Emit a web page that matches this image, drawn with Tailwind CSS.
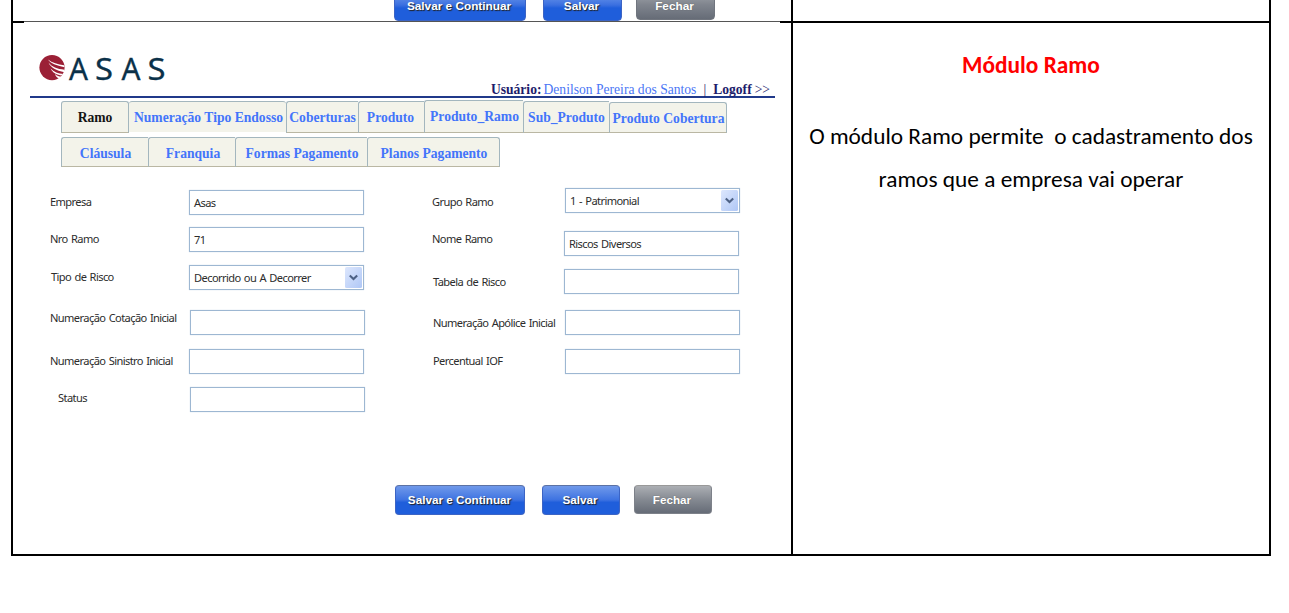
<!DOCTYPE html>
<html lang="pt-BR">
<head>
<meta charset="utf-8">
<title>Módulo Ramo</title>
<script src="https://cdn.jsdelivr.net/npm/@tailwindcss/browser@4"></script>
</head>
<body class="bg-white h-[613px] overflow-hidden pl-[11px]">
<div class="w-[1260px] h-[556px] flex flex-col">

  <!-- End of the previous table row -->
  <div class="flex h-[21px] border-x-2 border-black overflow-hidden">
    <div class="w-[778px] flex items-end pl-[381px] font-['Liberation_Sans',Arial,sans-serif] font-bold text-[11.8px] text-white text-center">
      <div class="w-[132px] h-[32px] shrink-0 rounded-b-[4px] border border-[#3c64c4] bg-linear-to-b from-[#6f98ea] from-10% via-[#3b70e0] via-50% to-[#1f5edb] to-60% leading-[32px] pr-[2px] [text-shadow:1px_1px_1px_#222]">Salvar e Continuar</div>
      <div class="w-[79px] h-[32px] shrink-0 ml-[17px] rounded-b-[4px] border border-[#3c64c4] bg-linear-to-b from-[#6f98ea] from-10% via-[#3b70e0] via-50% to-[#1f5edb] to-60% leading-[32px] pr-[2px] [text-shadow:1px_1px_1px_#222]">Salvar</div>
      <div class="w-[79px] h-[31px] mb-px shrink-0 ml-[14px] rounded-b-[4px] border border-[#70757e] bg-linear-to-b from-[#a8abb0] via-[#80858e] to-[#666c77] leading-[32px] pr-[2px] [text-shadow:0_0_1px_#555]">Fechar</div>
    </div>
    <div class="w-[2px] bg-black"></div>
  </div>

  <!-- Divider between the rows -->
  <div class="flex h-[2px] shrink-0">
    <div class="w-[13px] bg-black"></div>
    <div class="w-[756px] h-px bg-[#555]"></div>
    <div class="flex-1 bg-black"></div>
  </div>

  <div class="flex h-[533px] border-x-2 border-b-2 border-black">
    <main class="w-[778px] pl-[17px] flex flex-col">
      <!-- Logo and user line -->
      <header class="w-[745px] h-[75px] flex items-start justify-between border-b-2 border-[#20398a]">
        <svg class="mt-[19px] ml-[8px] shrink-0" width="134" height="52" viewBox="0 -8 134 52">
          <circle cx="14" cy="17.600" r="12.600" fill="#9b2036"/>
          <g fill="#fff">
            <path d="M10 9.500C13 13.500 18 15.500 26.500 17.200L26 15.300C20 14.500 14 12.800 10 9.500Z"/>
            <path d="M10.500 12.500C13 18 18 20.500 26.500 22.200L26.500 19.700C19 19 14 17 10.500 12.500Z"/>
            <path d="M12.500 18.500C15 23 18 24.500 23 25.500L25.500 24C20 23.500 16 22 12.500 18.500Z"/>
            <path d="M17 24C17.500 26.500 19 27.500 21 28.500L23.500 26.500C21 26.500 19 26 17 24Z"/>
          </g>
          <g fill="#0b3149" stroke="#0b3149" stroke-width="0.300" font-family="Noto Sans, sans-serif" font-size="31.500">
            <text x="31" y="30" textLength="19" lengthAdjust="spacingAndGlyphs">A</text>
            <text x="57" y="30" textLength="18" lengthAdjust="spacingAndGlyphs">S</text>
            <text x="83.500" y="30" textLength="19" lengthAdjust="spacingAndGlyphs">A</text>
            <text x="109.500" y="30" textLength="18" lengthAdjust="spacingAndGlyphs">S</text>
          </g>
        </svg>
        <div class="mt-[59px] mr-[5px] flex h-[15px] leading-[15px] text-[13.6px] text-[#1d1c6b] font-['Liberation_Serif','Times_New_Roman',serif] whitespace-nowrap">
          <b>Usuário:</b>
          <span class="ml-[2px] text-[#4a76f5]">Denilson Pereira dos Santos</span>
          <span class="ml-[7px]">|</span>
          <b class="ml-[7px]">Logoff</b>
          <span class="ml-[3px]">&gt;&gt;</span>
        </div>
      </header>

      <!-- Tabs -->
      <nav class="pl-[31px] pt-[2px] font-['Liberation_Serif','Times_New_Roman',serif] font-bold text-[13.6px] text-[#4375fa] text-center whitespace-nowrap">
        <div class="flex h-[33px] items-end leading-[31px]">
          <div class="w-[68px] h-[32px] bg-[#f3f3ea] border border-[#a3b6be] border-b-[#bab7a3] rounded-t-[3px] text-[#151515]">Ramo</div>
          <div class="w-[157px] h-[31px] mb-px pl-[2px] bg-[#f3f3ea] border-t border-[#a3b6be] rounded-t-[3px]">Numeração Tipo Endosso</div>
          <div class="w-[72px] h-[32px] bg-[#f3f3ea] border border-r-0 border-[#a3b6be] border-b-[#bab7a3] rounded-tl-[3px]">Coberturas</div>
          <div class="w-[66px] h-[32px] bg-[#f3f3ea] border border-r-0 border-[#a3b6be] border-b-[#bab7a3] rounded-tl-[3px] pr-[2px]">Produto</div>
          <div class="w-[99px] h-[33px] pl-px bg-[#f3f3ea] border border-r-0 border-[#a3b6be] border-b-[#bab7a3] rounded-tl-[3px]">Produto_Ramo</div>
          <div class="w-[86px] h-[32px] bg-[#f3f3ea] border border-r-0 border-[#a3b6be] border-b-[#bab7a3] rounded-tl-[3px]">Sub_Produto</div>
          <div class="w-[118px] h-[31px] pl-px bg-[#f3f3ea] border border-[#a3b6be] border-b-[#bab7a3] rounded-t-[3px]">Produto Cobertura</div>
        </div>
        <div class="flex h-[30px] mt-[4px] leading-[31px]">
          <div class="w-[87px] pl-px bg-[#f3f3ea] border border-r-0 border-[#a3b6be] border-b-[#bab7a3] rounded-tl-[3px]">Cláusula</div>
          <div class="w-[87px] bg-[#f3f3ea] border border-r-0 border-[#a3b6be] border-b-[#bab7a3] rounded-tl-[3px] pl-[2px]">Franquia</div>
          <div class="w-[132px] pl-px bg-[#f3f3ea] border border-r-0 border-[#a3b6be] border-b-[#bab7a3] rounded-tl-[3px]">Formas Pagamento</div>
          <div class="w-[133px] pl-px bg-[#f3f3ea] border border-[#a3b6be] border-b-[#bab7a3] rounded-t-[3px]">Planos Pagamento</div>
        </div>
      </nav>

      <!-- Form -->
      <form class="flex items-start h-[318px] pl-[20px] pt-[21px] text-[11.1px] tracking-[-0.6px] [word-spacing:1px] text-[#2c2c2c] font-['Noto_Sans',Tahoma,sans-serif] whitespace-nowrap leading-[16px]">
        <div class="w-[139px] flex flex-col pt-[6px]">
          <label class="h-[37px]">Empresa</label>
          <label class="h-[38px]">Nro Ramo</label>
          <label class="h-[41px] pl-px">Tipo de Risco</label>
          <label class="h-[43px]">Numeração Cotação Inicial</label>
          <label class="h-[37px]">Numeração Sinistro Inicial</label>
          <label class="pl-[8px]">Status</label>
        </div>
        <div class="w-[243px] flex flex-col pt-[2px] leading-[23px]">
          <div class="w-[175px] h-[25px] border border-[#9db7d2] shadow-[0_0_1px_#c4d4e4] pl-[4px]">Asas</div>
          <div class="w-[175px] h-[25px] border border-[#9db7d2] shadow-[0_0_1px_#c4d4e4] pl-[4px] mt-[12px]">71</div>
          <div class="w-[175px] h-[25px] border border-[#9db7d2] shadow-[0_0_1px_#c4d4e4] pl-[4px] mt-[13px] flex justify-between">Decorrido ou A Decorrer
            <svg class="m-[1px] shrink-0" width="17" height="21" viewBox="0 0 17 21"><defs><linearGradient id="drop" x1="0" y1="0" x2="1" y2="1"><stop offset="0" stop-color="#dde7fd"/><stop offset="1" stop-color="#afc7f6"/></linearGradient></defs><rect width="17" height="21" rx="1.500" fill="url(#drop)"/><path d="M4.800 8.500L8.500 12L12.200 8.500" fill="none" stroke="#4d6185" stroke-width="2.100"/></svg>
          </div>
          <div class="w-[175px] h-[25px] border border-[#9db7d2] shadow-[0_0_1px_#c4d4e4] mt-[20px] ml-px"></div>
          <div class="w-[175px] h-[25px] border border-[#9db7d2] shadow-[0_0_1px_#c4d4e4] mt-[14px]"></div>
          <div class="w-[175px] h-[25px] border border-[#9db7d2] shadow-[0_0_1px_#c4d4e4] mt-[13px] ml-px"></div>
        </div>
        <div class="w-[132px] flex flex-col pt-[6px]">
          <label class="h-[37px]">Grupo Ramo</label>
          <label class="h-[43px]">Nome Ramo</label>
          <label class="h-[41px] pl-px">Tabela de Risco</label>
          <label class="h-[38px] pl-px">Numeração Apólice Inicial</label>
          <label class="pl-px">Percentual IOF</label>
        </div>
        <div class="flex flex-col leading-[23px]">
          <div class="w-[175px] h-[25px] border border-[#9db7d2] shadow-[0_0_1px_#c4d4e4] pl-[4px] ml-px flex justify-between">1 - Patrimonial
            <svg class="m-[1px] shrink-0" width="17" height="21" viewBox="0 0 17 21"><rect width="17" height="21" rx="1.500" fill="url(#drop)"/><path d="M4.800 8.500L8.500 12L12.200 8.500" fill="none" stroke="#4d6185" stroke-width="2.100"/></svg>
          </div>
          <div class="w-[175px] h-[25px] border border-[#9db7d2] shadow-[0_0_1px_#c4d4e4] pl-[4px] mt-[18px]">Riscos Diversos</div>
          <div class="w-[175px] h-[25px] border border-[#9db7d2] shadow-[0_0_1px_#c4d4e4] mt-[13px]"></div>
          <div class="w-[175px] h-[25px] border border-[#9db7d2] shadow-[0_0_1px_#c4d4e4] mt-[16px] ml-px"></div>
          <div class="w-[175px] h-[25px] border border-[#9db7d2] shadow-[0_0_1px_#c4d4e4] mt-[14px] ml-px"></div>
        </div>
      </form>

      <!-- Actions -->
      <div class="flex pl-[365px] font-['Liberation_Sans',Arial,sans-serif] font-bold text-[11.7px] text-white text-center leading-[28px]">
        <div class="w-[130px] h-[30px] rounded-[4px] border border-[#3c64c4] border-t-[#5c72a4] bg-linear-to-b from-[#7099ea] via-[#3d72e1] via-50% to-[#1f5edb] to-58% pr-px [text-shadow:1px_1px_1px_#222]">Salvar e Continuar</div>
        <div class="w-[78px] h-[30px] ml-[17px] rounded-[4px] border border-[#3c64c4] border-t-[#5c72a4] bg-linear-to-b from-[#7099ea] via-[#3d72e1] via-50% to-[#1f5edb] to-58% pr-[2px] [text-shadow:1px_1px_1px_#222]">Salvar</div>
        <div class="w-[78px] h-[29px] ml-[14px] rounded-[4px] border border-[#7d8189] border-t-[#999] bg-linear-to-b from-[#acafb4] via-[#858a92] to-[#666c77] pr-[2px] [text-shadow:0_0_1px_#555]">Fechar</div>
      </div>
    </main>

    <!-- Description -->
    <aside class="flex-1 border-l-2 border-black pt-[21px] text-center font-['Carlito','Lato',sans-serif] text-[23.35px] leading-[43px] text-black">
      <h1 class="font-bold text-[#ff0000]">Módulo Ramo</h1>
      <p class="mt-[28px] whitespace-pre">O módulo Ramo permite  o cadastramento dos
ramos que a empresa vai operar</p>
    </aside>
  </div>
</div>
</body>
</html>
